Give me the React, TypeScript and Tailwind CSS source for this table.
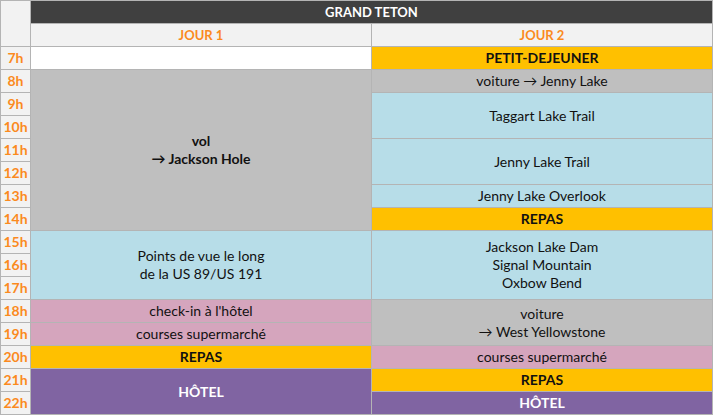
const HOURS = [7, 8, 9, 10, 11, 12, 13, 14, 15, 16, 17, 18, 19, 20, 21, 22];

const cell = "flex items-center justify-center text-center leading-[18px]";

export default function App() {
  return (
    <div className="w-[713px] h-[415px] bg-white font-['Lato',sans-serif] text-[14px] text-[#111]">
      <div className="grid grid-cols-[29px_340px_340px] grid-rows-[repeat(18,22px)] gap-px p-px bg-[#b4b4b4] w-[713px]">
        {/* corner + headers */}
        <div className="row-span-2 bg-[#f2f2f2]" />
        <div className={`${cell} col-span-2 bg-[#404040] text-white font-bold text-[13px]`}>
          GRAND TETON
        </div>
        <div className={`${cell} bg-[#f2f2f2] text-[#fb8a1e] font-bold text-[13px]`}>JOUR 1</div>
        <div className={`${cell} bg-[#f2f2f2] text-[#fb8a1e] font-bold text-[13px]`}>JOUR 2</div>

        {/* hours column */}
        {HOURS.map((h, i) => (
          <div
            key={h}
            className={`${cell} col-start-1 bg-[#f2f2f2] text-[#fb8a1e] font-bold`}
            style={{ gridRowStart: i + 3 }}
          >
            {h}h
          </div>
        ))}

        {/* jour 1 */}
        <div className="col-start-2 row-start-3 bg-white" />
        <div className={`${cell} col-start-2 row-start-4 row-span-7 bg-[#bfbfbf] font-bold`}>
          vol
          <br />→ Jackson Hole
        </div>
        <div className={`${cell} col-start-2 row-start-11 row-span-3 bg-[#b7dde8]`}>
          Points de vue le long
          <br />
          de la US 89/US 191
        </div>
        <div className={`${cell} col-start-2 row-start-14 bg-[#d5a5bd]`}>check-in à l'hôtel</div>
        <div className={`${cell} col-start-2 row-start-15 bg-[#d5a5bd]`}>courses supermarché</div>
        <div className={`${cell} col-start-2 row-start-16 bg-[#ffc000] font-bold`}>REPAS</div>
        <div className={`${cell} col-start-2 row-start-17 row-span-2 bg-[#8064a2] text-white font-bold`}>
          HÔTEL
        </div>

        {/* jour 2 */}
        <div className={`${cell} col-start-3 row-start-3 bg-[#ffc000] font-bold`}>PETIT-DEJEUNER</div>
        <div className={`${cell} col-start-3 row-start-4 bg-[#bfbfbf]`}>voiture → Jenny Lake</div>
        <div className={`${cell} col-start-3 row-start-5 row-span-2 bg-[#b7dde8]`}>Taggart Lake Trail</div>
        <div className={`${cell} col-start-3 row-start-7 row-span-2 bg-[#b7dde8]`}>Jenny Lake Trail</div>
        <div className={`${cell} col-start-3 row-start-9 bg-[#b7dde8]`}>Jenny Lake Overlook</div>
        <div className={`${cell} col-start-3 row-start-10 bg-[#ffc000] font-bold`}>REPAS</div>
        <div className={`${cell} col-start-3 row-start-11 row-span-3 bg-[#b7dde8]`}>
          Jackson Lake Dam
          <br />
          Signal Mountain
          <br />
          Oxbow Bend
        </div>
        <div className={`${cell} col-start-3 row-start-14 row-span-2 bg-[#bfbfbf]`}>
          voiture
          <br />→ West Yellowstone
        </div>
        <div className={`${cell} col-start-3 row-start-16 bg-[#d5a5bd]`}>courses supermarché</div>
        <div className={`${cell} col-start-3 row-start-17 bg-[#ffc000] font-bold`}>REPAS</div>
        <div className={`${cell} col-start-3 row-start-18 bg-[#8064a2] text-white font-bold`}>HÔTEL</div>
      </div>
    </div>
  );
}
